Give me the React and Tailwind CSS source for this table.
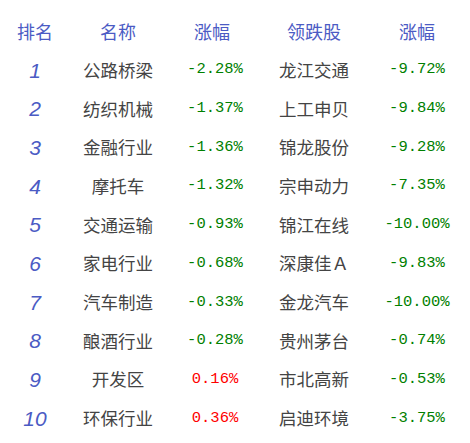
import React from 'react'

const rows = [
  ['1', '公路桥梁', '-2.28%', '龙江交通', '-9.72%'],
  ['2', '纺织机械', '-1.37%', '上工申贝', '-9.84%'],
  ['3', '金融行业', '-1.36%', '锦龙股份', '-9.28%'],
  ['4', '摩托车', '-1.32%', '宗申动力', '-7.35%'],
  ['5', '交通运输', '-0.93%', '锦江在线', '-10.00%'],
  ['6', '家电行业', '-0.68%', '深康佳Ａ', '-9.83%'],
  ['7', '汽车制造', '-0.33%', '金龙汽车', '-10.00%'],
  ['8', '酿酒行业', '-0.28%', '贵州茅台', '-0.74%'],
  ['9', '开发区', '0.16%', '市北高新', '-0.53%'],
  ['10', '环保行业', '0.36%', '启迪环境', '-3.75%'],
]

const grid = 'grid grid-cols-[70px_96px_98px_100px_106px] h-[38.7px] items-center text-center'
const cjk = { fontFamily: '"Noto Sans CJK SC", sans-serif' }

function Pct({ value }) {
  const up = !value.startsWith('-')
  return (
    <span
      className={`text-[15.5px] ${up ? 'text-[#ff0000]' : 'text-[#008000]'}`}
      style={{ fontFamily: '"Liberation Mono", monospace' }}
    >
      {value}
    </span>
  )
}

export default function App() {
  return (
    <div className="w-[470px] h-[443px] bg-white pt-[12px] overflow-hidden" style={cjk}>
      {/* header */}
      <div className={`${grid} text-[18px] text-[#4b5bc4]`}>
        <span>排名</span>
        <span>名称</span>
        <span className="-translate-x-[3px]">涨幅</span>
        <span>领跌股</span>
        <span>涨幅</span>
      </div>

      {rows.map(([rank, name, pct, stock, pct2]) => (
        <div key={rank} className={grid}>
          <span
            className="italic text-[21px] text-[#4b5bc4] leading-none"
            style={{ fontFamily: '"Liberation Sans", sans-serif' }}
          >
            {rank}
          </span>
          <span className="text-[17.5px] text-[#444]">{name}</span>
          <Pct value={pct} />
          <span className="text-[17.5px] text-[#444]">{stock}</span>
          <Pct value={pct2} />
        </div>
      ))}
    </div>
  )
}
